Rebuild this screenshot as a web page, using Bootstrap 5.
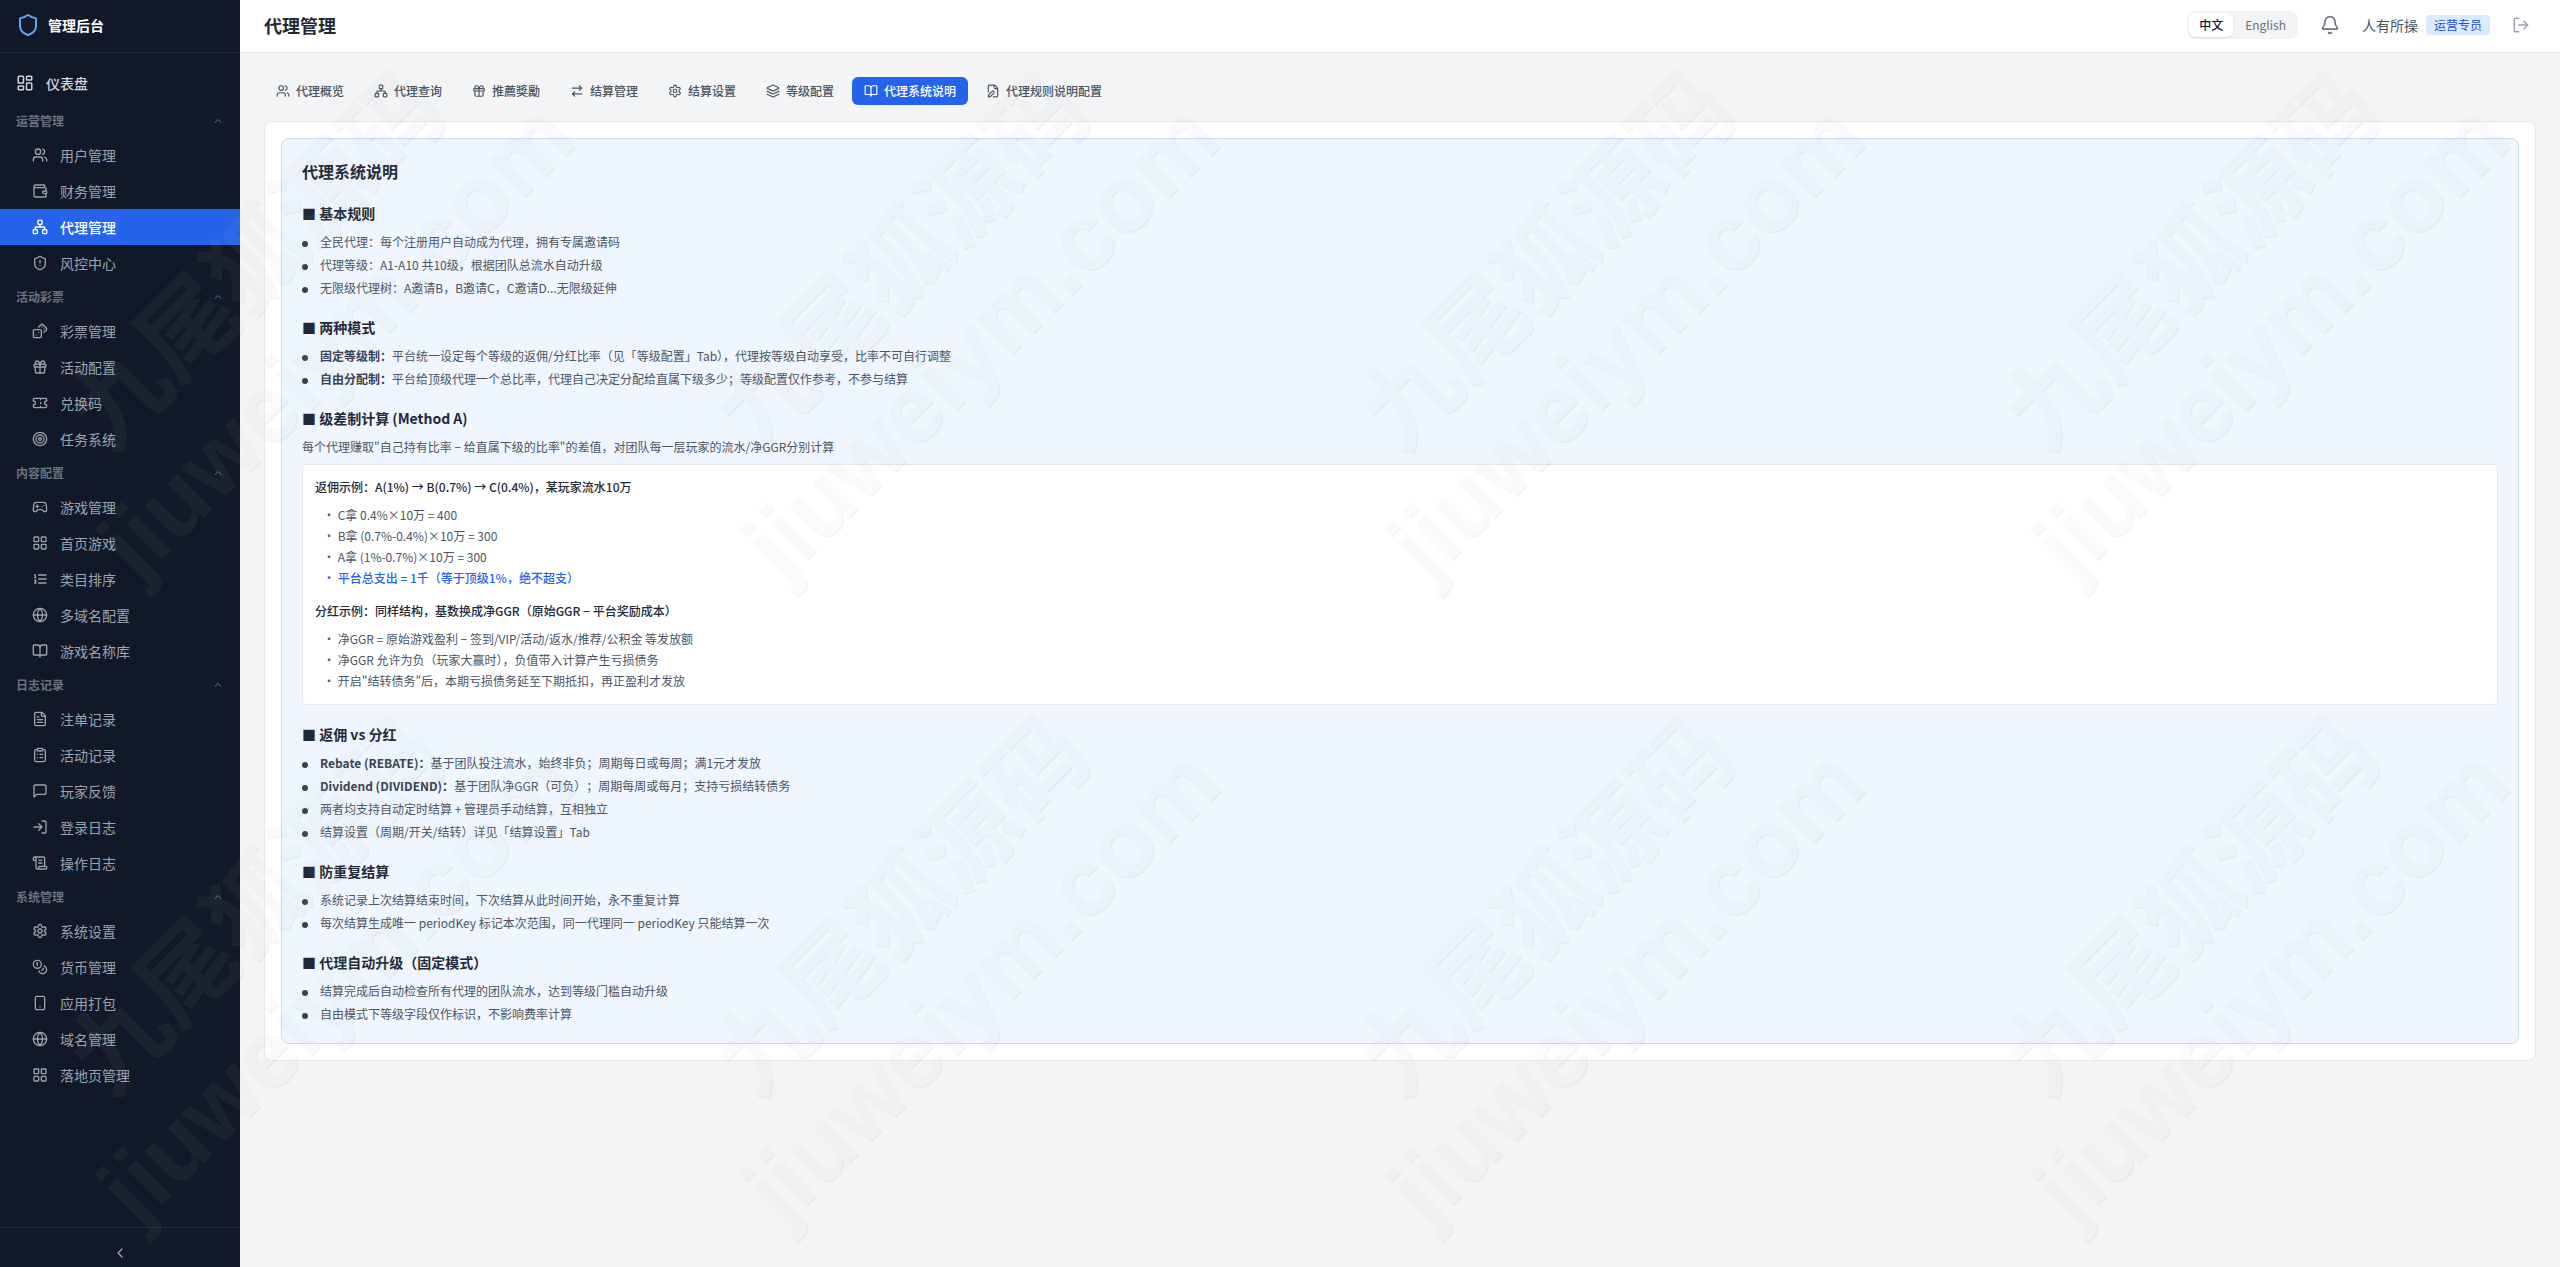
<!DOCTYPE html>
<html lang="zh-CN">
<head>
<meta charset="utf-8">
<meta name="viewport" content="width=device-width, initial-scale=1">
<title>代理管理</title>
<link rel="stylesheet" href="https://cdn.jsdelivr.net/npm/bootstrap@5.3.0/dist/css/bootstrap.min.css">
<style>
  body { font-family: "Noto Sans CJK SC", sans-serif; font-size: 14px; line-height: 20px; color: #1f2937; background: #f3f4f6; }
  .ico { width: 16px; height: 16px; flex: none; fill: none; stroke: currentColor; stroke-width: 2; stroke-linecap: round; stroke-linejoin: round; }
  .ico-xs { width: 12px; height: 12px; }
  .ico-sm { width: 14px; height: 14px; }
  .ico-md { width: 18px; height: 18px; }
  .ico-lg { width: 20px; height: 20px; }
  .ico-xl { width: 24px; height: 24px; }
  a { color: inherit; text-decoration: none; }
  .plain-btn { border: 0; background: none; padding: 0; color: inherit; }

  .side { width: 240px; background: #111827; color: #9ca3af; }
  .side-brand { height: 53px; padding: 0 16px 2px; border-bottom: 1px solid #1f2937; color: #fff; font-weight: 700; }
  .side-brand .ico { color: #60a5fa; }
  .side-home { height: 44px; padding: 0 16px; gap: 12px; color: #d1d5db; font-weight: 500; }
  .side-group { height: 32px; padding: 0 16px; font-size: 12px; font-weight: 600; color: #6b7280; }
  .side-item { height: 36px; padding: 0 32px; gap: 12px; }
  .side-item.active { background: #2563eb; color: #fff; font-weight: 500; }
  .side-foot { height: 40px; padding-top: 10px; border-top: 1px solid #1f2937; }

  .topbar { height: 53px; padding: 0 24px 2px; background: #fff; border-bottom: 1px solid #e5e7eb; }
  .topbar h1 { font-size: 18px; line-height: 28px; font-weight: 700; }
  .langs { padding: 2px; gap: 2px; background: #f3f4f6; border-radius: 8px; }
  .langs button { height: 24px; padding: 0 10px; font-size: 12px; color: #6b7280; border-radius: 6px; }
  .langs button.active { background: #fff; color: #111827; font-weight: 500; box-shadow: 0 1px 2px rgba(0,0,0,.1); }
  .icon-btn { padding: 6px; color: #6b7280; }
  .icon-btn.quiet { color: #9ca3af; }
  .user-name { color: #4b5563; }
  .role { padding: 0 8px; font-size: 12px; background: #dbeafe; color: #1d4ed8; border-radius: 4px; }

  .tabs-row { gap: 6px; margin-bottom: 16px; }
  .tabs-row a { height: 28px; padding: 0 12px; gap: 6px; font-size: 12px; font-weight: 500; color: #4b5563; border-radius: 6px; }
  .tabs-row a.active { background: #2563eb; color: #fff; }

  .panel { background: #fff; border: 1px solid #e5e7eb; border-radius: 8px; padding: 16px; }
  .doc { background: #eff6ff; border: 1px solid #bfdbfe; border-radius: 8px; padding: 20px 20px 19px; font-size: 12px; color: #4b5563; }
  .doc h2 { font-size: 16px; line-height: 24px; font-weight: 700; color: #1f2937; margin-bottom: 20px; }
  .doc h3 { font-size: 14px; line-height: 20px; font-weight: 700; color: #1f2937; margin-bottom: 9px; }
  .doc section + section { margin-top: 19px; }
  .doc p { margin-bottom: 7px; }
  .rules { gap: 3px; }
  .rules li::before { content: ""; display: inline-block; width: 6px; height: 6px; margin-right: 12px; border-radius: 50%; background: #374151; vertical-align: middle; }
  .rules strong { font-weight: 700; color: #374151; }
  .full-width { text-spacing-trim: space-all; font-kerning: none; font-feature-settings: "chws" 0, "halt" 0; }
  .example { background: #fff; border: 1px solid #e5e7eb; border-radius: 4px; padding: 12px 12px 13px; }
  .example h4 { font-size: 12px; line-height: 20px; font-weight: 500; color: #1f2937; margin-bottom: 8px; }
  .example ul + h4 { margin-top: 13px; }
  .example ul { gap: 1px; padding-left: 8px; }
  .example .total { color: #2563eb; font-weight: 500; }

  .stamp { z-index: 1080; }
  .stamp text { font-weight: 700; text-anchor: middle; fill: #b9b9b9; }
  .stamp .zh { font-family: "Noto Sans CJK SC", sans-serif; font-size: 96px; }
  .stamp .en { font-family: "Liberation Sans", sans-serif; font-size: 95px; }
</style>
<script src="https://cdn.jsdelivr.net/npm/bootstrap@5.3.0/dist/js/bootstrap.bundle.min.js"></script>
</head>
<body>
<svg class="d-none" aria-hidden="true">
  <symbol id="shield" viewBox="0 0 24 24"><path d="M20 13c0 5-3.5 7.5-7.66 8.95a1 1 0 0 1-.67-.01C7.5 20.5 4 18 4 13V6a1 1 0 0 1 1-1c2 0 4.5-1.2 6.24-2.72a1.17 1.17 0 0 1 1.52 0C14.51 3.81 17 5 19 5a1 1 0 0 1 1 1z"/></symbol>
  <symbol id="shield-alert" viewBox="0 0 24 24"><path d="M20 13c0 5-3.5 7.5-7.66 8.95a1 1 0 0 1-.67-.01C7.5 20.5 4 18 4 13V6a1 1 0 0 1 1-1c2 0 4.5-1.2 6.24-2.72a1.17 1.17 0 0 1 1.52 0C14.51 3.81 17 5 19 5a1 1 0 0 1 1 1zM12 8v4M12 16h.01"/></symbol>
  <symbol id="dashboard" viewBox="0 0 24 24"><rect x="3" y="3" width="7" height="9" rx="1"/><rect x="14" y="3" width="7" height="5" rx="1"/><rect x="14" y="12" width="7" height="9" rx="1"/><rect x="3" y="16" width="7" height="5" rx="1"/></symbol>
  <symbol id="users" viewBox="0 0 24 24"><path d="M16 21v-2a4 4 0 0 0-4-4H6a4 4 0 0 0-4 4v2M22 21v-2a4 4 0 0 0-3-3.87M16 3.13a4 4 0 0 1 0 7.75"/><circle cx="9" cy="7" r="4"/></symbol>
  <symbol id="wallet" viewBox="0 0 24 24"><path d="M19 7V4a1 1 0 0 0-1-1H5a2 2 0 0 0 0 4h15a1 1 0 0 1 1 1v4h-3a2 2 0 0 0 0 4h3a1 1 0 0 0 1-1v-2a1 1 0 0 0-1-1M3 5v14a2 2 0 0 0 2 2h15a1 1 0 0 0 1-1v-4"/></symbol>
  <symbol id="network" viewBox="0 0 24 24"><rect x="16" y="16" width="6" height="6" rx="1"/><rect x="2" y="16" width="6" height="6" rx="1"/><rect x="9" y="2" width="6" height="6" rx="1"/><path d="M5 16v-3a1 1 0 0 1 1-1h12a1 1 0 0 1 1 1v3M12 12V8"/></symbol>
  <symbol id="dices" viewBox="0 0 24 24"><rect x="2" y="10" width="12" height="12" rx="2"/><path d="m17.92 14 3.5-3.5a2.24 2.24 0 0 0 0-3l-5-4.92a2.24 2.24 0 0 0-3 0L10 6M6 18h.01M10 14h.01M15 6h.01M18 9h.01"/></symbol>
  <symbol id="gift" viewBox="0 0 24 24"><rect x="3" y="8" width="18" height="4" rx="1"/><path d="M12 8v13M19 12v7a2 2 0 0 1-2 2H7a2 2 0 0 1-2-2v-7M7.5 8a2.5 2.5 0 0 1 0-5A4.8 8 0 0 1 12 8a4.8 8 0 0 1 4.5-5 2.5 2.5 0 0 1 0 5"/></symbol>
  <symbol id="ticket" viewBox="0 0 24 24"><path d="M2 9a3 3 0 0 1 0 6v2a2 2 0 0 0 2 2h16a2 2 0 0 0 2-2v-2a3 3 0 0 1 0-6V7a2 2 0 0 0-2-2H4a2 2 0 0 0-2 2ZM13 5v2M13 17v2M13 11v2"/></symbol>
  <symbol id="target" viewBox="0 0 24 24"><circle cx="12" cy="12" r="10"/><circle cx="12" cy="12" r="6"/><circle cx="12" cy="12" r="2"/></symbol>
  <symbol id="gamepad" viewBox="0 0 24 24"><path d="M6 11h4M8 9v4M15 12h.01M18 10h.01M17.32 5H6.68a4 4 0 0 0-3.978 3.59c-.006.052-.01.101-.017.152C2.604 9.416 2 14.456 2 16a3 3 0 0 0 3 3c1 0 1.5-.5 2-1l1.414-1.414A2 2 0 0 1 9.828 16h4.344a2 2 0 0 1 1.414.586L17 18c.5.5 1 1 2 1a3 3 0 0 0 3-3c0-1.545-.604-6.584-.685-7.258-.007-.05-.011-.1-.017-.151A4 4 0 0 0 17.32 5z"/></symbol>
  <symbol id="grid" viewBox="0 0 24 24"><rect x="3" y="3" width="7" height="7" rx="1"/><rect x="14" y="3" width="7" height="7" rx="1"/><rect x="14" y="14" width="7" height="7" rx="1"/><rect x="3" y="14" width="7" height="7" rx="1"/></symbol>
  <symbol id="ordered" viewBox="0 0 24 24"><path d="M10 12h11M10 18h11M10 6h11M4 10h2M4 6h1v4M6 18H4c0-1 2-2 2-3s-1-1.5-2-1"/></symbol>
  <symbol id="globe" viewBox="0 0 24 24"><circle cx="12" cy="12" r="10"/><path d="M12 2a14.5 14.5 0 0 0 0 20 14.5 14.5 0 0 0 0-20M2 12h20"/></symbol>
  <symbol id="book" viewBox="0 0 24 24"><path d="M12 7v14M3 18a1 1 0 0 1-1-1V4a1 1 0 0 1 1-1h5a4 4 0 0 1 4 4 4 4 0 0 1 4-4h5a1 1 0 0 1 1 1v13a1 1 0 0 1-1 1h-6a3 3 0 0 0-3 3 3 3 0 0 0-3-3z"/></symbol>
  <symbol id="file" viewBox="0 0 24 24"><path d="M15 2H6a2 2 0 0 0-2 2v16a2 2 0 0 0 2 2h12a2 2 0 0 0 2-2V7ZM14 2v4a2 2 0 0 0 2 2h4M10 9H8M16 13H8M16 17H8"/></symbol>
  <symbol id="clipboard" viewBox="0 0 24 24"><rect x="8" y="2" width="8" height="4" rx="1"/><path d="M16 4h2a2 2 0 0 1 2 2v14a2 2 0 0 1-2 2H6a2 2 0 0 1-2-2V6a2 2 0 0 1 2-2h2M12 11h4M12 16h4M8 11h.01M8 16h.01"/></symbol>
  <symbol id="message" viewBox="0 0 24 24"><path d="M21 15a2 2 0 0 1-2 2H7l-4 4V5a2 2 0 0 1 2-2h14a2 2 0 0 1 2 2z"/></symbol>
  <symbol id="login" viewBox="0 0 24 24"><path d="M15 3h4a2 2 0 0 1 2 2v14a2 2 0 0 1-2 2h-4M10 17l5-5-5-5M15 12H3"/></symbol>
  <symbol id="logout" viewBox="0 0 24 24"><path d="M9 21H5a2 2 0 0 1-2-2V5a2 2 0 0 1 2-2h4M16 17l5-5-5-5M21 12H9"/></symbol>
  <symbol id="scroll" viewBox="0 0 24 24"><path d="M15 12h-5M15 8h-5M19 17V5a2 2 0 0 0-2-2H4M8 21h12a2 2 0 0 0 2-2v-1a1 1 0 0 0-1-1H11a1 1 0 0 0-1 1v1a2 2 0 1 1-4 0V5a2 2 0 1 0-4 0v2a1 1 0 0 0 1 1h3"/></symbol>
  <symbol id="settings" viewBox="0 0 24 24"><path d="M12.22 2h-.44a2 2 0 0 0-2 2v.18a2 2 0 0 1-1 1.73l-.43.25a2 2 0 0 1-2 0l-.15-.08a2 2 0 0 0-2.73.73l-.22.38a2 2 0 0 0 .73 2.73l.15.1a2 2 0 0 1 1 1.72v.51a2 2 0 0 1-1 1.74l-.15.09a2 2 0 0 0-.73 2.73l.22.38a2 2 0 0 0 2.73.73l.15-.08a2 2 0 0 1 2 0l.43.25a2 2 0 0 1 1 1.73V20a2 2 0 0 0 2 2h.44a2 2 0 0 0 2-2v-.18a2 2 0 0 1 1-1.73l.43-.25a2 2 0 0 1 2 0l.15.08a2 2 0 0 0 2.73-.73l.22-.39a2 2 0 0 0-.73-2.73l-.15-.08a2 2 0 0 1-1-1.74v-.5a2 2 0 0 1 1-1.74l.15-.09a2 2 0 0 0 .73-2.73l-.22-.38a2 2 0 0 0-2.73-.73l-.15.08a2 2 0 0 1-2 0l-.43-.25a2 2 0 0 1-1-1.73V4a2 2 0 0 0-2-2z"/><circle cx="12" cy="12" r="3"/></symbol>
  <symbol id="coins" viewBox="0 0 24 24"><circle cx="8" cy="8" r="6"/><path d="M18.09 10.37A6 6 0 1 1 10.34 18M7 6h1v4M16.71 13.88l.7.71-2.82 2.82"/></symbol>
  <symbol id="phone" viewBox="0 0 24 24"><rect x="5" y="2" width="14" height="20" rx="2"/><path d="M12 18h.01"/></symbol>
  <symbol id="swap" viewBox="0 0 24 24"><path d="M16 3l4 4-4 4M20 7H4M8 21l-4-4 4-4M4 17h16"/></symbol>
  <symbol id="layers" viewBox="0 0 24 24"><path d="M12.83 2.18a2 2 0 0 0-1.66 0L2.6 6.08a1 1 0 0 0 0 1.83l8.58 3.91a2 2 0 0 0 1.66 0l8.58-3.9a1 1 0 0 0 0-1.83ZM22 17.65l-9.17 4.16a2 2 0 0 1-1.66 0L2 17.65M22 12.65l-9.17 4.16a2 2 0 0 1-1.66 0L2 12.65"/></symbol>
  <symbol id="file-pen" viewBox="0 0 24 24"><path d="M12.5 22H18a2 2 0 0 0 2-2V7l-5-5H6a2 2 0 0 0-2 2v9.5M14 2v4a2 2 0 0 0 2 2h4M13.378 15.626a1 1 0 1 0-3.004-3.004l-5.01 5.012a2 2 0 0 0-.506.854l-.837 2.87a.5.5 0 0 0 .62.62l2.87-.837a2 2 0 0 0 .854-.506z"/></symbol>
  <symbol id="bell" viewBox="0 0 24 24"><path d="M10.268 21a2 2 0 0 0 3.464 0M3.262 15.326A1 1 0 0 0 4 17h16a1 1 0 0 0 .74-1.673C19.41 13.956 18 12.499 18 8A6 6 0 0 0 6 8c0 4.499-1.411 5.956-2.738 7.326"/></symbol>
  <symbol id="up" viewBox="0 0 24 24"><path d="m18 15-6-6-6 6"/></symbol>
  <symbol id="left" viewBox="0 0 24 24"><path d="m15 18-6-6 6-6"/></symbol>
</svg>

<div class="d-flex min-vh-100 position-relative">
  <aside class="side d-flex flex-column flex-shrink-0">
    <div class="side-brand d-flex align-items-center gap-2"><svg class="ico ico-xl"><use href="#shield"/></svg>管理后台</div>
    <nav class="flex-grow-1 pt-2">
      <a href="#" class="side-home d-flex align-items-center"><svg class="ico ico-md"><use href="#dashboard"/></svg>仪表盘</a>

      <button type="button" class="plain-btn side-group w-100 d-flex align-items-center justify-content-between">运营管理<svg class="ico ico-xs"><use href="#up"/></svg></button>
      <a href="#" class="side-item d-flex align-items-center"><svg class="ico"><use href="#users"/></svg>用户管理</a>
      <a href="#" class="side-item d-flex align-items-center"><svg class="ico"><use href="#wallet"/></svg>财务管理</a>
      <a href="#" class="side-item active d-flex align-items-center" aria-current="page"><svg class="ico"><use href="#network"/></svg>代理管理</a>
      <a href="#" class="side-item d-flex align-items-center"><svg class="ico"><use href="#shield-alert"/></svg>风控中心</a>

      <button type="button" class="plain-btn side-group w-100 d-flex align-items-center justify-content-between">活动彩票<svg class="ico ico-xs"><use href="#up"/></svg></button>
      <a href="#" class="side-item d-flex align-items-center"><svg class="ico"><use href="#dices"/></svg>彩票管理</a>
      <a href="#" class="side-item d-flex align-items-center"><svg class="ico"><use href="#gift"/></svg>活动配置</a>
      <a href="#" class="side-item d-flex align-items-center"><svg class="ico"><use href="#ticket"/></svg>兑换码</a>
      <a href="#" class="side-item d-flex align-items-center"><svg class="ico"><use href="#target"/></svg>任务系统</a>

      <button type="button" class="plain-btn side-group w-100 d-flex align-items-center justify-content-between">内容配置<svg class="ico ico-xs"><use href="#up"/></svg></button>
      <a href="#" class="side-item d-flex align-items-center"><svg class="ico"><use href="#gamepad"/></svg>游戏管理</a>
      <a href="#" class="side-item d-flex align-items-center"><svg class="ico"><use href="#grid"/></svg>首页游戏</a>
      <a href="#" class="side-item d-flex align-items-center"><svg class="ico"><use href="#ordered"/></svg>类目排序</a>
      <a href="#" class="side-item d-flex align-items-center"><svg class="ico"><use href="#globe"/></svg>多域名配置</a>
      <a href="#" class="side-item d-flex align-items-center"><svg class="ico"><use href="#book"/></svg>游戏名称库</a>

      <button type="button" class="plain-btn side-group w-100 d-flex align-items-center justify-content-between">日志记录<svg class="ico ico-xs"><use href="#up"/></svg></button>
      <a href="#" class="side-item d-flex align-items-center"><svg class="ico"><use href="#file"/></svg>注单记录</a>
      <a href="#" class="side-item d-flex align-items-center"><svg class="ico"><use href="#clipboard"/></svg>活动记录</a>
      <a href="#" class="side-item d-flex align-items-center"><svg class="ico"><use href="#message"/></svg>玩家反馈</a>
      <a href="#" class="side-item d-flex align-items-center"><svg class="ico"><use href="#login"/></svg>登录日志</a>
      <a href="#" class="side-item d-flex align-items-center"><svg class="ico"><use href="#scroll"/></svg>操作日志</a>

      <button type="button" class="plain-btn side-group w-100 d-flex align-items-center justify-content-between">系统管理<svg class="ico ico-xs"><use href="#up"/></svg></button>
      <a href="#" class="side-item d-flex align-items-center"><svg class="ico"><use href="#settings"/></svg>系统设置</a>
      <a href="#" class="side-item d-flex align-items-center"><svg class="ico"><use href="#coins"/></svg>货币管理</a>
      <a href="#" class="side-item d-flex align-items-center"><svg class="ico"><use href="#phone"/></svg>应用打包</a>
      <a href="#" class="side-item d-flex align-items-center"><svg class="ico"><use href="#globe"/></svg>域名管理</a>
      <a href="#" class="side-item d-flex align-items-center"><svg class="ico"><use href="#grid"/></svg>落地页管理</a>
    </nav>
    <button type="button" class="plain-btn side-foot w-100 d-flex align-items-center justify-content-center" aria-label="收起"><svg class="ico"><use href="#left"/></svg></button>
  </aside>

  <div class="flex-grow-1 d-flex flex-column">
    <header class="topbar d-flex align-items-center justify-content-between">
      <h1 class="m-0">代理管理</h1>
      <div class="d-flex align-items-center gap-3">
        <div class="langs d-flex">
          <button type="button" class="plain-btn active">中文</button>
          <button type="button" class="plain-btn">English</button>
        </div>
        <button type="button" class="plain-btn icon-btn d-flex" aria-label="通知"><svg class="ico ico-lg"><use href="#bell"/></svg></button>
        <div class="d-flex align-items-center gap-2"><span class="user-name">人有所操</span><span class="role">运营专员</span></div>
        <button type="button" class="plain-btn icon-btn quiet d-flex" aria-label="退出"><svg class="ico ico-md"><use href="#logout"/></svg></button>
      </div>
    </header>

    <main class="p-4">
      <nav class="tabs-row d-flex flex-wrap">
        <a href="#" class="d-flex align-items-center"><svg class="ico ico-sm"><use href="#users"/></svg>代理概览</a>
        <a href="#" class="d-flex align-items-center"><svg class="ico ico-sm"><use href="#network"/></svg>代理查询</a>
        <a href="#" class="d-flex align-items-center"><svg class="ico ico-sm"><use href="#gift"/></svg>推薦獎勵</a>
        <a href="#" class="d-flex align-items-center"><svg class="ico ico-sm"><use href="#swap"/></svg>结算管理</a>
        <a href="#" class="d-flex align-items-center"><svg class="ico ico-sm"><use href="#settings"/></svg>结算设置</a>
        <a href="#" class="d-flex align-items-center"><svg class="ico ico-sm"><use href="#layers"/></svg>等级配置</a>
        <a href="#" class="active d-flex align-items-center" aria-current="page"><svg class="ico ico-sm"><use href="#book"/></svg>代理系统说明</a>
        <a href="#" class="d-flex align-items-center"><svg class="ico ico-sm"><use href="#file-pen"/></svg>代理规则说明配置</a>
      </nav>

      <div class="panel">
        <article class="doc">
          <h2>代理系统说明</h2>
          <section>
            <h3>■ 基本规则</h3>
            <ul class="rules list-unstyled d-flex flex-column m-0">
              <li>全民代理：每个注册用户自动成为代理，拥有专属邀请码</li>
              <li>代理等级：A1-A10 共10级，根据团队总流水自动升级</li>
              <li>无限级代理树：A邀请B，B邀请C，C邀请D...无限级延伸</li>
            </ul>
          </section>
          <section>
            <h3>■ 两种模式</h3>
            <ul class="rules list-unstyled d-flex flex-column m-0">
              <li><strong>固定等级制：</strong>平台统一设定每个等级的返佣/分红比率（见「等级配置」Tab），代理按等级自动享受，比率不可自行调整</li>
              <li><strong>自由分配制：</strong>平台给顶级代理一个总比率，代理自己决定分配给直属下级多少；等级配置仅作参考，不参与结算</li>
            </ul>
          </section>
          <section>
            <h3>■ 级差制计算 (Method A)</h3>
            <p>每个代理赚取"自己持有比率 − 给直属下级的比率"的差值，对团队每一层玩家的流水/净GGR分别计算</p>
            <div class="example">
              <h4>返佣示例：A(1%) → B(0.7%) → C(0.4%)，某玩家流水10万</h4>
              <ul class="list-unstyled d-flex flex-column m-0">
                <li>• C拿 0.4%×10万 = 400</li>
                <li>• B拿 (0.7%-0.4%)×10万 = 300</li>
                <li>• A拿 (1%-0.7%)×10万 = 300</li>
                <li class="total">• 平台总支出 = 1千（等于顶级1%，绝不超支）</li>
              </ul>
              <h4>分红示例：同样结构，基数换成净GGR（原始GGR − 平台奖励成本）</h4>
              <ul class="list-unstyled d-flex flex-column m-0">
                <li>• 净GGR = 原始游戏盈利 − 签到/VIP/活动/返水/推荐/公积金 等发放额</li>
                <li>• 净GGR 允许为负（玩家大赢时），负值带入计算产生亏损债务</li>
                <li>• 开启"结转债务"后，本期亏损债务延至下期抵扣，再正盈利才发放</li>
              </ul>
            </div>
          </section>
          <section>
            <h3>■ 返佣 vs 分红</h3>
            <ul class="rules list-unstyled d-flex flex-column m-0">
              <li><strong>Rebate (REBATE)：</strong>基于团队投注流水，始终非负；周期每日或每周；满1元才发放</li>
              <li><strong>Dividend (DIVIDEND)：</strong>基于团队净GGR<span class="full-width">（可负）；</span>周期每周或每月；支持亏损结转债务</li>
              <li>两者均支持自动定时结算 + 管理员手动结算，互相独立</li>
              <li>结算设置（周期/开关/结转）详见「结算设置」Tab</li>
            </ul>
          </section>
          <section>
            <h3>■ 防重复结算</h3>
            <ul class="rules list-unstyled d-flex flex-column m-0">
              <li>系统记录上次结算结束时间，下次结算从此时间开始，永不重复计算</li>
              <li>每次结算生成唯一 periodKey 标记本次范围，同一代理同一 periodKey 只能结算一次</li>
            </ul>
          </section>
          <section>
            <h3>■ 代理自动升级（固定模式）</h3>
            <ul class="rules list-unstyled d-flex flex-column m-0">
              <li>结算完成后自动检查所有代理的团队流水，达到等级门槛自动升级</li>
              <li>自由模式下等级字段仅作标识，不影响费率计算</li>
            </ul>
          </section>
        </article>
      </div>
    </main>
  </div>

  <svg class="stamp position-absolute top-0 start-0 w-100 h-100 pe-none" aria-hidden="true">
    <defs>
      <filter id="emboss" x="-5%" y="-5%" width="110%" height="110%" color-interpolation-filters="sRGB">
        <feOffset in="SourceAlpha" dx="0" dy="2" result="moved"/>
        <feGaussianBlur in="moved" stdDeviation="0.5" result="soft"/>
        <feComposite in="soft" in2="SourceAlpha" operator="out" result="edge"/>
        <feComponentTransfer in="edge" result="rim"><feFuncA type="linear" slope="0.05"/></feComponentTransfer>
        <feComponentTransfer in="SourceGraphic" result="body"><feFuncA type="linear" slope="0.07"/></feComponentTransfer>
        <feMerge><feMergeNode in="rim"/><feMergeNode in="body"/></feMerge>
      </filter>
      <pattern id="tile" width="645" height="645" patternUnits="userSpaceOnUse">
        <g transform="translate(322 326) rotate(-45)" filter="url(#emboss)">
          <text class="zh" y="-60">九尾狐源码</text>
          <text class="en" y="52">jiuweiym.com</text>
        </g>
      </pattern>
    </defs>
    <rect width="100%" height="100%" fill="url(#tile)"/>
  </svg>
</div>
</body>
</html>
